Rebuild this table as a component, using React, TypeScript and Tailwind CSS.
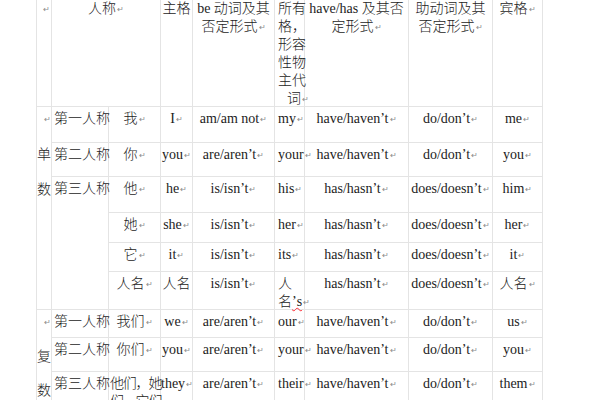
import React from 'react';

// paragraph mark, as Word shows it
const P = () => <span className="text-[8px] text-[#8a8a8a] font-['DejaVu_Sans'] align-middle ml-[1px]">↵</span>;

interface CellProps {
  children?: React.ReactNode;
  className?: string;
}

const Cell: React.FC<CellProps> = ({ children, className = '' }) => (
  <div
    className={`border-r border-b border-[#e4e4e4] pt-[3px] leading-[18px] text-center whitespace-nowrap ${className}`}
  >
    {children}
  </div>
);

const Head: React.FC<CellProps> = ({ children, className = '' }) => (
  <div
    className={`border-r border-b border-[#e4e4e4] leading-[18px] text-center whitespace-nowrap ${className}`}
  >
    {children}
  </div>
);

type Row = [string, string, string, string, React.ReactNode, string, string, string];

const singular: Row[] = [
  ['第一人称', '我', 'I', 'am/am not', 'my', 'have/haven’t', 'do/don’t', 'me'],
  ['第二人称', '你', 'you', 'are/aren’t', 'your', 'have/haven’t', 'do/don’t', 'you'],
  ['第三人称', '他', 'he', 'is/isn’t', 'his', 'has/hasn’t', 'does/doesn’t', 'him'],
  ['', '她', 'she', 'is/isn’t', 'her', 'has/hasn’t', 'does/doesn’t', 'her'],
  ['', '它', 'it', 'is/isn’t', 'its', 'has/hasn’t', 'does/doesn’t', 'it'],
  ['', '人名', '人名', 'is/isn’t', 'x', 'has/hasn’t', 'does/doesn’t', '人名'],
];

const plural: Row[] = [
  ['第一人称', '我们', 'we', 'are/aren’t', 'our', 'have/haven’t', 'do/don’t', 'us'],
  ['第二人称', '你们', 'you', 'are/aren’t', 'your', 'have/haven’t', 'do/don’t', 'you'],
  ['第三人称', 'x', 'they', 'are/aren’t', 'their', 'have/haven’t', 'do/don’t', 'them'],
];

const renderRow = (r: Row, i: number, group: string) => {
  const [person, cn, subj, be, poss, have, aux, obj] = r;
  const cells: React.ReactNode[] = [];
  if (person) {
    cells.push(
      <Cell
        key={`${group}${i}p`}
        className={`text-left pl-[2px] ${group === 's' && i === 2 ? 'row-span-4' : ''}`}
      >
        {person}
      </Cell>
    );
  }
  cells.push(
    <Cell key={`${group}${i}c`} className={cn === 'x' ? 'text-left pl-[1px] tracking-[-1.2px]' : ''}>
      {cn === 'x' ? (
        <>
          他们，她
          <br />
          们，它们
        </>
      ) : (
        <>
          {cn}
          <P />
        </>
      )}
    </Cell>
  );
  cells.push(
    <Cell key={`${group}${i}s`}>
      {subj}
      {subj !== '人名' && <P />}
    </Cell>
  );
  cells.push(
    <Cell key={`${group}${i}b`}>
      {be}
      <P />
    </Cell>
  );
  cells.push(
    <Cell key={`${group}${i}o`} className="text-left pl-[3px]">
      {poss === 'x' ? (
        <>
          人
          <br />
          名<span className="underline decoration-wavy decoration-red-500 decoration-1">’s</span>
          <P />
        </>
      ) : (
        <>
          {poss}
          <P />
        </>
      )}
    </Cell>
  );
  cells.push(
    <Cell key={`${group}${i}h`}>
      {have}
      <P />
    </Cell>
  );
  cells.push(
    <Cell key={`${group}${i}a`}>
      {aux}
      <P />
    </Cell>
  );
  cells.push(
    <Cell key={`${group}${i}j`}>
      {obj}
      <P />
    </Cell>
  );
  return cells;
};

export default function App() {
  return (
    <div className="w-[600px] h-[400px] overflow-hidden bg-white text-[14px] font-light text-[#1c1c1c] font-['Liberation_Serif','Noto_Sans_CJK_SC',serif]">
      <div className="ml-[36px] w-[506px] grid grid-cols-[15px_57px_52px_32px_82px_30px_104px_84px_50px] grid-rows-[107px_36px_34px_36px_30px_29px_38px_28px_34px_40px] border-l border-[#e4e4e4]">
        <Head className="text-right pr-[1px]">
          <P />
        </Head>
        <Head className="col-span-2">
          人称
          <P />
        </Head>
        <Head>主格</Head>
        <Head>
          be 动词及其
          <br />
          否定形式
          <P />
        </Head>
        <Head className="text-left pl-[3px]">
          所有
          <br />
          格，
          <br />
          形容
          <br />
          性物
          <br />
          主代
          <br />
          <span className="pl-[9px]">词</span>
          <P />
        </Head>
        <Head>
          have/has 及其否
          <br />
          定形式
          <P />
        </Head>
        <Head>
          助动词及其
          <br />
          否定形式
          <P />
        </Head>
        <Head>
          宾格
          <P />
        </Head>

        <Cell className="row-span-6 flex flex-col items-center gap-[17px]">
          <span className="self-end">
            <P />
          </span>
          <span>单</span>
          <span>数</span>
        </Cell>
        {singular.map((r, i) => renderRow(r, i, 's'))}

        <Cell className="row-span-3 flex flex-col items-center gap-[16px]">
          <span className="self-end">
            <P />
          </span>
          <span>复</span>
          <span>数</span>
        </Cell>
        {plural.map((r, i) => renderRow(r, i, 'p'))}
      </div>
    </div>
  );
}
